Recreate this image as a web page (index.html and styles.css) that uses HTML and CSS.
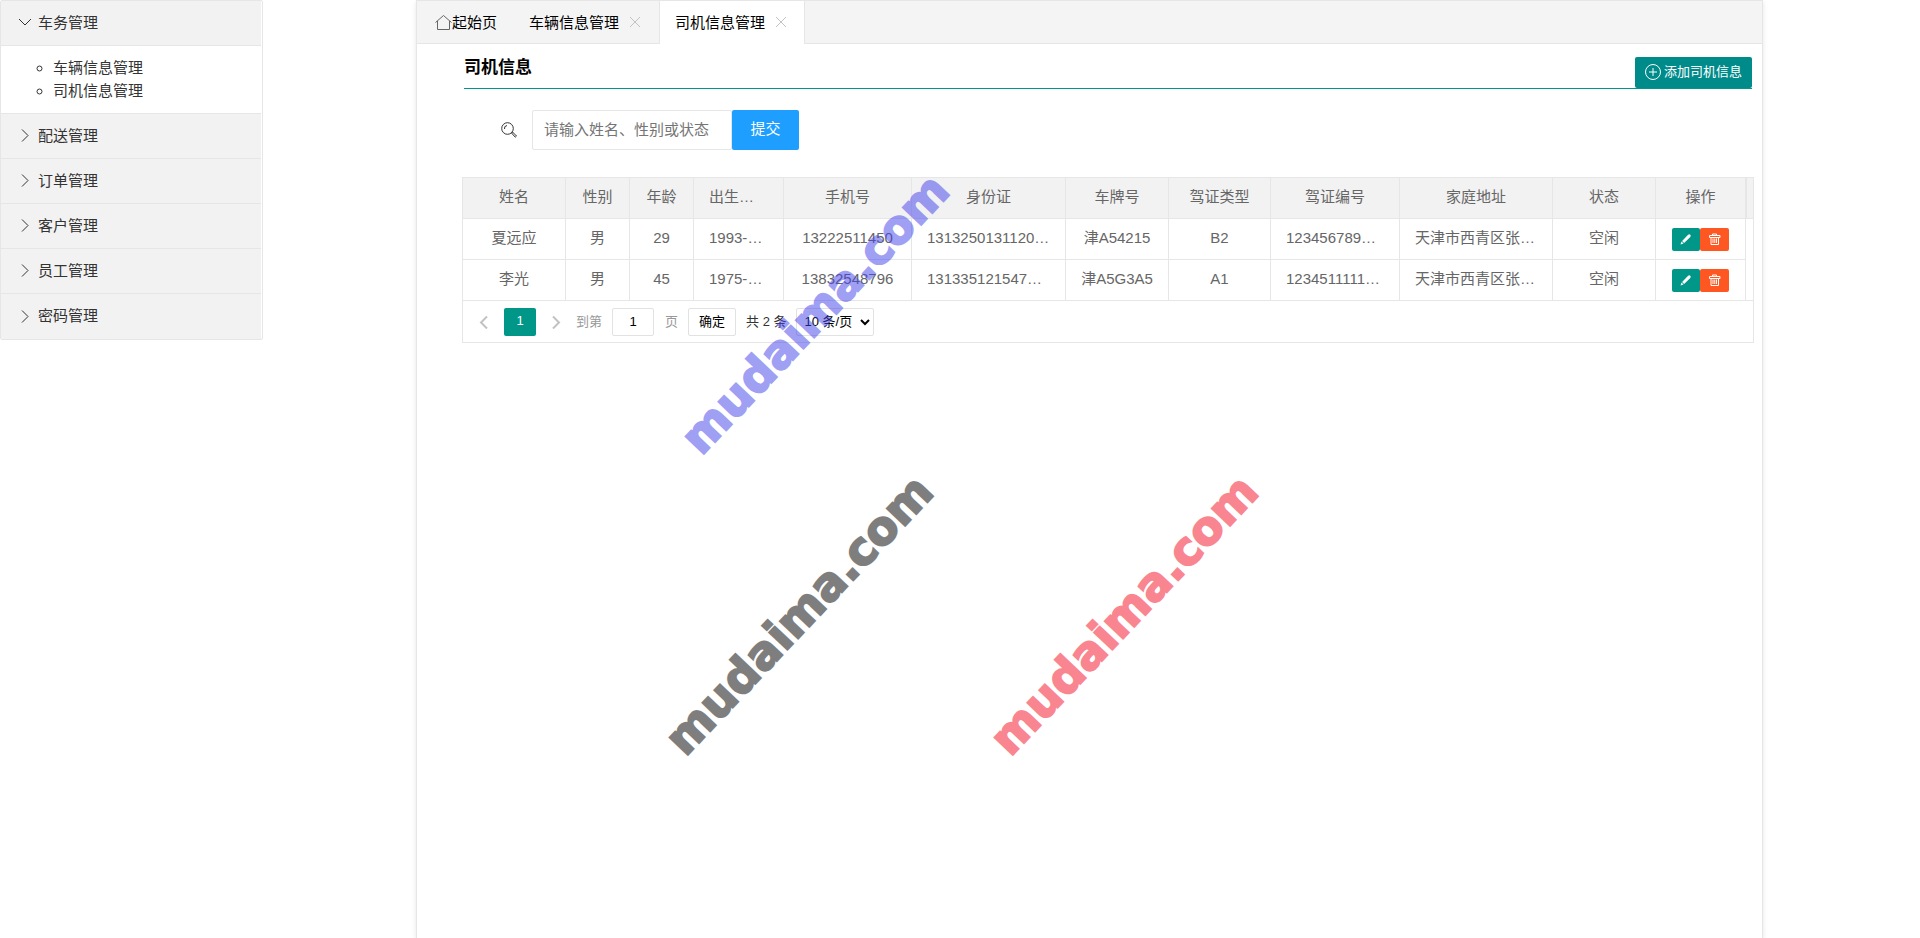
FILE: index.html
```html
<!DOCTYPE html>
<html lang="zh-CN">
<head>
<meta charset="utf-8">
<title>司机信息管理</title>
<link rel="stylesheet" href="styles.css">
</head>
<body>
<svg class="defs" aria-hidden="true">
  <symbol id="down" viewBox="0 0 14 14"><path d="M1 4l6 6 6-6"/></symbol>
  <symbol id="right" viewBox="0 0 14 14"><path d="M4 1.500l6 6-6 6"/></symbol>
  <symbol id="left" viewBox="0 0 14 14"><path d="M10 1.500l-6 6 6 6"/></symbol>
  <symbol id="close" viewBox="0 0 16 16"><path d="M3 3l10 10M13 3L3 13"/></symbol>
  <symbol id="pencil" viewBox="0 0 12 12"><path d="M.5 11.500l1-3 2 2zM2.100 7.900L8.100 1.700Q9.300 0.800 10.300 1.700 11.200 2.700 10.300 3.900L4.100 9.900z"/></symbol>
  <symbol id="trash" viewBox="0 0 12 12"><path d="M3.500 2.500V1h4v1.500M.5 2.500h10.500v2H.5zM2 4.500v7h7.500v-7M4 5.500v4.500M5.800 5.500v4.500M7.500 5.500v4.500"/></symbol>
</svg>
<div class="page">
  <nav class="sidebar">
    <button class="group"><svg class="icon"><use href="#down"/></svg>车务管理</button>
    <ul class="sub">
      <li><a href="#">车辆信息管理</a></li>
      <li><a href="#">司机信息管理</a></li>
    </ul>
    <button class="group"><svg class="icon"><use href="#right"/></svg>配送管理</button>
    <button class="group"><svg class="icon"><use href="#right"/></svg>订单管理</button>
    <button class="group"><svg class="icon"><use href="#right"/></svg>客户管理</button>
    <button class="group"><svg class="icon"><use href="#right"/></svg>员工管理</button>
    <button class="group"><svg class="icon"><use href="#right"/></svg>密码管理</button>
  </nav>
  <main class="panel">
    <div class="tabs">
      <button class="tab"><svg class="home" viewBox="0 0 17 17"><path d="M.5 8.500L8.500 1.500l8 7M2.500 7v8.500h12V7"/></svg>起始页</button>
      <button class="tab">车辆信息管理<svg class="close"><use href="#close"/></svg></button>
      <button class="tab active">司机信息管理<svg class="close"><use href="#close"/></svg></button>
    </div>
    <header class="heading">
      <h1>司机信息</h1>
      <button class="add"><svg viewBox="0 0 16 16"><circle cx="8" cy="8" r="7.500"/><path d="M8 4v8M4 8h8"/></svg>添加司机信息</button>
    </header>
    <form class="search">
      <label for="keyword" aria-label="搜索"><svg viewBox="0 0 16 16"><circle cx="6.500" cy="6.500" r="5.800"/><path d="M3.500 7A3 3 0 0 1 6 3.500M10.500 11l1-1 4 4-1.200 1.200z"/></svg></label>
      <input id="keyword" type="text" placeholder="请输入姓名、性别或状态">
      <button type="button">提交</button>
    </form>
    <section class="grid">
      <table>
        <colgroup><col class="c103"><col class="c64"><col class="c64"><col class="c90"><col class="c128"><col class="c154"><col class="c103"><col class="c102"><col class="c129"><col class="c153"><col class="c103"><col class="c90"><col></colgroup>
        <thead><tr><th>姓名</th><th>性别</th><th>年龄</th><th>出生日期</th><th>手机号</th><th>身份证</th><th>车牌号</th><th>驾证类型</th><th>驾证编号</th><th>家庭地址</th><th>状态</th><th>操作</th><th class="rest"></th></tr></thead>
        <tbody>
          <tr><td>夏远应</td><td>男</td><td>29</td><td>1993-01-31</td><td>13222511450</td><td>131325013112011450</td><td>津A54215</td><td>B2</td><td>123456789012</td><td>天津市西青区张家窝镇</td><td>空闲</td><td class="ops"><div><button class="edit" aria-label="编辑"><svg><use href="#pencil"/></svg></button><button class="del" aria-label="删除"><svg><use href="#trash"/></svg></button></div></td><td class="rest"></td></tr>
          <tr><td>李光</td><td>男</td><td>45</td><td>1975-01-31</td><td>13832548796</td><td>131335121547896541</td><td>津A5G3A5</td><td>A1</td><td>12345111112222</td><td>天津市西青区张家窝镇</td><td>空闲</td><td class="ops"><div><button class="edit" aria-label="编辑"><svg><use href="#pencil"/></svg></button><button class="del" aria-label="删除"><svg><use href="#trash"/></svg></button></div></td><td class="rest"></td></tr>
        </tbody>
      </table>
      <div class="pager">
        <button class="arrow" aria-label="上一页"><svg><use href="#left"/></svg></button>
        <button class="current">1</button>
        <button class="arrow" aria-label="下一页"><svg><use href="#right"/></svg></button>
        <label class="jump">到第<input type="text" value="1">页</label>
        <button class="ok">确定</button>
        <span class="total">共 2 条</span>
        <select aria-label="每页条数"><option>10 条/页</option></select>
      </div>
    </section>
    <span class="mark blue">mudaima.com</span>
    <span class="mark black">mudaima.com</span>
    <span class="mark red">mudaima.com</span>
  </main>
</div>
</body>
</html>
```
FILE: styles.css
```css
* { box-sizing: border-box; }
body {
  margin: 0;
  background: #fff;
  color: #333;
  font: 15px/23px "Liberation Sans", "Noto Sans CJK SC", sans-serif;
}
button, input, select { margin: 0; font: inherit; color: inherit; }
button { padding: 0; border: 0; background: none; cursor: pointer; }
svg { fill: none; stroke: currentColor; stroke-width: 1; flex: none; }
.defs { display: none; }
.page { display: flex; align-items: flex-start; }

.sidebar {
  display: flex;
  flex-direction: column;
  width: 263px;
  padding-right: 1px;
  border: 1px solid #e6e6e6;
  border-radius: 2px;
}
.group {
  display: flex;
  align-items: center;
  gap: 6px;
  height: 45px;
  padding: 0 0 2px 17px;
  border-bottom: 1px solid #e6e6e6;
  background: #f2f2f2;
}
.group:last-child { border-bottom: 0; }
.icon { width: 14px; height: 14px; }
.sub {
  margin: 0;
  padding: 10px 0 11px 52px;
  border-bottom: 1px solid #e6e6e6;
  list-style: circle;
}
.sub a { color: inherit; text-decoration: none; }

.panel {
  position: relative;
  flex: 1;
  min-width: 0;
  min-height: 100vh;
  margin: 0 157px 0 153px;
  border: 1px solid #e6e6e6;
  border-bottom: 0;
  box-shadow: 0 2px 5px rgba(0, 0, 0, .1);
}
.tabs {
  display: flex;
  height: 43px;
  padding-left: 2px;
  border-bottom: 1px solid #e6e6e6;
  background: #f4f4f4;
  color: #000;
}
.tab { display: flex; align-items: center; padding: 0 16px; }
.tab.active {
  height: 43px;
  padding: 0 15px 1px;
  border: 1px solid #e6e6e6;
  border-width: 0 1px;
  background: #fff;
}
.home { width: 17px; height: 17px; color: #666; }
.close { width: 16px; height: 16px; margin-left: 8px; color: #c2c2c2; }

.heading {
  display: flex;
  justify-content: space-between;
  align-items: flex-end;
  height: 45px;
  margin: 0 10px 0 47px;
  border-bottom: 1px solid #009688;
}
h1 { margin: 0; padding-bottom: 9px; color: #000; font-size: 17px; line-height: 23px; }
.add {
  display: flex;
  align-items: center;
  gap: 3px;
  height: 31px;
  padding: 0 10px 2px 10px;
  border-radius: 2px;
  background: #008b8b;
  color: #fff;
  font-size: 13px;
}
.add svg { width: 16px; height: 16px; }

.search { display: flex; align-items: center; margin: 21px 0 27px 84px; }
.search label { display: flex; margin-right: 15px; }
.search svg { width: 16px; height: 16px; }
.search input {
  width: 200px;
  height: 40px;
  padding: 0 11px 2px;
  border: 1px solid #e6e6e6;
  border-radius: 2px;
}
.search input::placeholder { color: #757575; }
.search button { width: 67px; height: 40px; padding-bottom: 3px; border-radius: 2px; background: #1e9fff; color: #fff; }

.grid { margin: 0 8px 0 45px; border: 1px solid #e6e6e6; color: #666; }
table { width: 100%; table-layout: fixed; border-collapse: separate; border-spacing: 0; }
.c64 { width: 64px; }
.c90 { width: 90px; }
.c102 { width: 102px; }
.c103 { width: 103px; }
.c128 { width: 128px; }
.c129 { width: 129px; }
.c153 { width: 153px; }
.c154 { width: 154px; }
th, td {
  height: 41px;
  padding: 0 15px 3px;
  border: 1px solid #e6e6e6;
  border-width: 0 1px 1px 0;
  font-weight: 400;
  text-align: center;
  overflow: hidden;
  text-overflow: ellipsis;
  white-space: nowrap;
}
th { background: #f2f2f2; }
.rest { padding: 0; border-right: 0; }
th.rest { border-left-width: 1px; }
td.rest { border-bottom: 0; }
tr:last-child td.rest { border-bottom: 1px solid #e6e6e6; }
.ops { padding-bottom: 0; }
.ops div { display: flex; justify-content: center; }
.ops button {
  display: flex;
  align-items: center;
  justify-content: center;
  width: 29px;
  height: 23px;
  border-radius: 2px;
  color: #fff;
}
.ops svg { width: 12px; height: 12px; }
.ops .edit { width: 28px; background: #009688; }
.edit svg { fill: #fff; stroke: none; }
.del { background: #ff5722; }

.pager { display: flex; align-items: center; height: 41px; padding-left: 9px; color: #333; font-size: 13px; }
.pager .arrow { display: flex; justify-content: center; width: 24px; color: #c2c2c2; }
.arrow svg { width: 14px; height: 14px; stroke-width: 2; }
.current { width: 32px; height: 28px; margin: 0 8px; padding-bottom: 2px; border-radius: 2px; background: #009688; color: #fff; }
.jump { display: flex; align-items: center; margin-left: 8px; color: #999; }
.jump input {
  width: 42px;
  height: 28px;
  margin: 0 11px 0 10px;
  border: 1px solid #e2e2e2;
  border-radius: 2px;
  color: #000;
  text-align: center;
}
.ok { width: 48px; height: 28px; margin: 0 10px; border: 1px solid #e2e2e2; border-radius: 2px; color: #000; }
.pager select {
  height: 28px;
  margin-left: 9px;
  padding: 0 4px;
  border: 1px solid #e2e2e2;
  border-radius: 2px;
  background: #fff;
  color: #000;
}

.mark {
  position: absolute;
  transform: rotate(-46.5deg);
  transform-origin: 0 100%;
  font: 700 46px/48px "DejaVu Sans", sans-serif;
  -webkit-text-stroke: 2px currentColor;
  opacity: .5;
  pointer-events: none;
}
.blue { left: 290px; top: 413px; color: #4141eb; }
.black { left: 274px; top: 714px; color: #000; }
.red { left: 599px; top: 714px; color: #f50d23; }
```
